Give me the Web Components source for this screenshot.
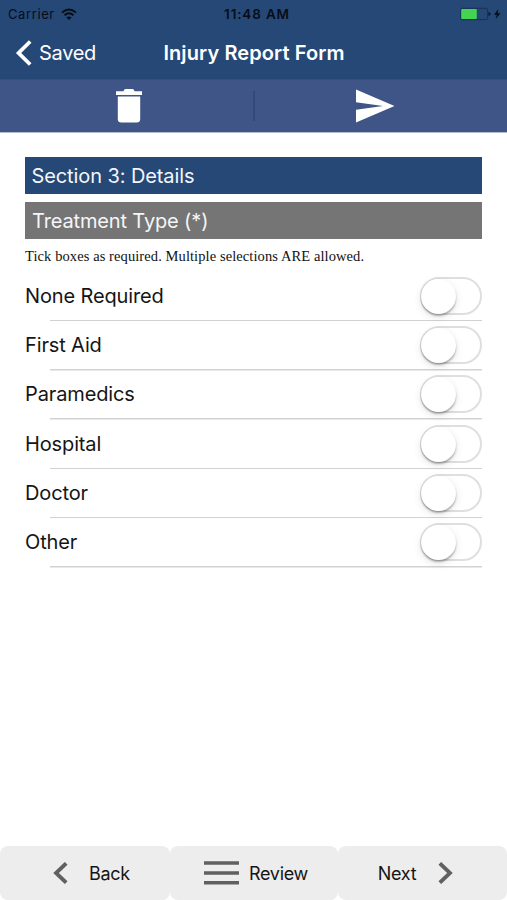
<!DOCTYPE html>
<html lang="en">
<head>
<meta charset="utf-8">
<title>Injury Report Form</title>
<style>
  html, body { margin: 0; height: 100%; }
  body { background: #fff; font-family: Inter, "Liberation Sans", sans-serif; color: #151515; overflow: hidden; }
</style>
</head>
<body>
<report-screen>
  <status-bar slot="top" carrier="Carrier" time="11:48 AM"></status-bar>
  <nav-header slot="top"><span slot="back">Saved</span><span slot="title">Injury Report Form</span></nav-header>
  <action-bar slot="top"></action-bar>

  <section-bar style="--ls: -0.1px">Section 3: Details</section-bar>
  <section-bar tone="grey" style="--ls: -0.14px">Treatment Type (*)</section-bar>
  <hint-text>Tick boxes as required. Multiple selections ARE allowed.</hint-text>
  <toggle-row>None Required</toggle-row>
  <toggle-row>First Aid</toggle-row>
  <toggle-row>Paramedics</toggle-row>
  <toggle-row>Hospital</toggle-row>
  <toggle-row>Doctor</toggle-row>
  <toggle-row>Other</toggle-row>

  <footer-nav slot="bottom"></footer-nav>
</report-screen>

<script>
class BaseElement extends HTMLElement {
    constructor() {
        super();
        this.attachShadow({ mode: 'open' });
        this.shadowRoot.innerHTML = this.constructor.markup;
    }
}

class ReportScreen extends BaseElement {
    static markup = `
      <style>
        :host { display: flex; flex-direction: column; height: 900px; }
        main { flex: 1; padding: 24px 25px 0; }
      </style>
      <slot name="top"></slot>
      <main><slot></slot></main>
      <slot name="bottom"></slot>
    `;
}

class StatusBar extends BaseElement {
    static markup = `
      <style>
        :host {
          display: grid; grid-template-columns: 1fr auto 1fr; align-items: center;
          height: 27px; padding: 0 5px 0 8px; background: #254877; color: #070d17;
          font-size: 13px; line-height: 28px;
        }
        .left, .right { display: flex; align-items: center; }
        .left { gap: 6px; letter-spacing: 0.6px; }
        .right { justify-content: flex-end; }
        .time { font-size: 13.5px; font-weight: 600; letter-spacing: 0.85px; padding-left: 4px; }
        svg { display: block; }
      </style>
      <div class="left">
        <span class="carrier"></span>
        <svg width="16" height="13" viewBox="0 0 16 13" fill="none" stroke="#070d17" stroke-width="1.9">
          <path d="M1 4.6Q8 -1.6 15 4.6M3.5 7.2Q8 3.3 12.5 7.2"/>
          <path d="M8 12 5.4 9.4Q8 7.4 10.6 9.4Z" fill="#070d17" stroke="none"/>
        </svg>
      </div>
      <span class="time"></span>
      <div class="right">
        <svg width="42" height="14" viewBox="0 0 42 14">
          <rect x="0.6" y="1.3" width="27" height="11.4" rx="1.6" fill="none" stroke="#173155"/>
          <rect x="1.2" y="2" width="15.6" height="10" rx="0.8" fill="#43d551"/>
          <path d="M28.5 5q2 .3 2 2t-2 2z" fill="#0c1727"/>
          <path d="M38.4 2 34 7.7h2.8L35.7 12 40.5 6.2h-2.9z" fill="#070d17"/>
        </svg>
      </div>
    `;

    connectedCallback() {
        this.shadowRoot.querySelector('.carrier').textContent = this.getAttribute('carrier');
        this.shadowRoot.querySelector('.time').textContent = this.getAttribute('time');
    }
}

class NavHeader extends BaseElement {
    static markup = `
      <style>
        :host {
          display: grid; grid-template-columns: 1fr auto 1fr; align-items: center;
          height: 52px; padding: 0 15px; box-sizing: border-box;
          background: #254877; color: #fff; font-size: 20px;
        }
        .back { display: flex; align-items: center; gap: 7px; letter-spacing: -0.3px; }
        .title { font-weight: 600; letter-spacing: 0.1px; padding-left: 1px; }
        .back, .title { height: 50px; line-height: 50px; }
      </style>
      <div class="back">
        <svg width="17" height="26" viewBox="0 0 17 26" fill="none" stroke="#fff" stroke-width="3.8">
          <path d="M15.2 1.5 3.6 13l11.6 11.5"/>
        </svg>
        <slot name="back"></slot>
      </div>
      <div class="title"><slot name="title"></slot></div>
    `;
}

class ActionBar extends BaseElement {
    static markup = `
      <style>
        :host {
          display: grid; grid-template-columns: 1fr 2px 1fr; align-items: center;
          height: 54px; background: #3f5487; border-bottom: 1px solid #b4bdd0; box-sizing: border-box;
          box-shadow: inset 0 1px #35507f;
        }
        div { display: flex; justify-content: center; }
        i { height: 30px; background: #334979; }
        .trash { padding-left: 5px; }
        .send { padding-right: 12px; }
      </style>
      <div class="trash">
        <svg width="28" height="36" viewBox="0 0 28 36" fill="#fff">
          <path d="M1 3.2h7.4q.6-2.2 2.4-2.2h6.4q1.8 0 2.4 2.2H27v3.9H1z"/>
          <path d="M2.8 8.4h22.4V31q0 3.6-3.6 3.6H6.4Q2.8 34.6 2.8 31z"/>
        </svg>
      </div>
      <i></i>
      <div class="send">
        <svg width="40" height="34" viewBox="0 0 40 34" fill="#fff">
          <path d="M1 .5 39.5 17 1 33.5V20.7L28 17 1 13.3z"/>
        </svg>
      </div>
    `;
}

class SectionBar extends BaseElement {
    static markup = `
      <style>
        :host {
          display: block; height: 37px; line-height: 38px; margin-bottom: 8px; padding-left: 6.5px;
          background: #254877; color: #f4f6f9; font-size: 20px; letter-spacing: var(--ls);
        }
        :host([tone="grey"]) { background: #757575; line-height: 38px; padding-left: 7px; }
      </style>
      <slot></slot>
    `;
}

class HintText extends BaseElement {
    static markup = `
      <style>
        :host {
          display: block; height: 27px; margin-top: -2px;
          font: 14.5px/22px "Liberation Serif", serif; letter-spacing: 0.09px;
          white-space: nowrap; color: #111;
        }
      </style>
      <slot></slot>
    `;
}

class ToggleRow extends BaseElement {
    static markup = `
      <style>
        :host {
          display: flex; justify-content: space-between; align-items: center;
          height: 49.3px; font-size: 20px; letter-spacing: -0.13px;
          background: linear-gradient(#d2d2d2, #d2d2d2) 25px 100% / 100% 1.5px no-repeat;
        }
        span { padding-bottom: 2px; }
        .switch {
          width: 62px; height: 38px; box-sizing: border-box; padding: 1px; margin-bottom: 1.5px;
          border: 2px solid #dfdfdf; border-radius: 19px; background: #fff;
        }
        .knob {
          width: 35px; height: 35px; margin: -1px 0 0 -2px; border-radius: 50%; background: #fff;
          box-shadow: 0 2px 2px rgba(0,0,0,.28), 0 3px 9px rgba(0,0,0,.11);
        }
      </style>
      <span><slot></slot></span>
      <div class="switch"><div class="knob"></div></div>
    `;
}

class FooterNav extends BaseElement {
    static markup = `
      <style>
        :host { display: grid; grid-template-columns: 170px 168px 169px; height: 54px; font-size: 18px; }
        div {
          display: flex; align-items: center; justify-content: center; background: #ededed;
          border-radius: 8px; letter-spacing: -0.3px;
        }
        .back { gap: 21px; padding-left: 13px; }
        .review { gap: 10px; padding-left: 4px; }
        .next { gap: 22px; padding-right: 14px; }
        svg { fill: none; stroke: #606060; }
      </style>
      <div class="back">
        <svg width="15" height="22" viewBox="0 0 15 22" stroke-width="3.8"><path d="M13.2 1.3 3 11l10.2 9.7"/></svg>
        <span>Back</span>
      </div>
      <div class="review">
        <svg width="35" height="24" viewBox="0 0 35 24" stroke-width="3.6"><path d="M0 2h35M0 12h35M0 21.8h35"/></svg>
        <span>Review</span>
      </div>
      <div class="next">
        <span>Next</span>
        <svg width="15" height="22" viewBox="0 0 15 22" stroke-width="3.8"><path d="M1.8 1.3 12 11 1.8 20.7"/></svg>
      </div>
    `;
}

customElements.define('report-screen', ReportScreen);
customElements.define('status-bar', StatusBar);
customElements.define('nav-header', NavHeader);
customElements.define('action-bar', ActionBar);
customElements.define('section-bar', SectionBar);
customElements.define('hint-text', HintText);
customElements.define('toggle-row', ToggleRow);
customElements.define('footer-nav', FooterNav);
</script>
</body>
</html>
